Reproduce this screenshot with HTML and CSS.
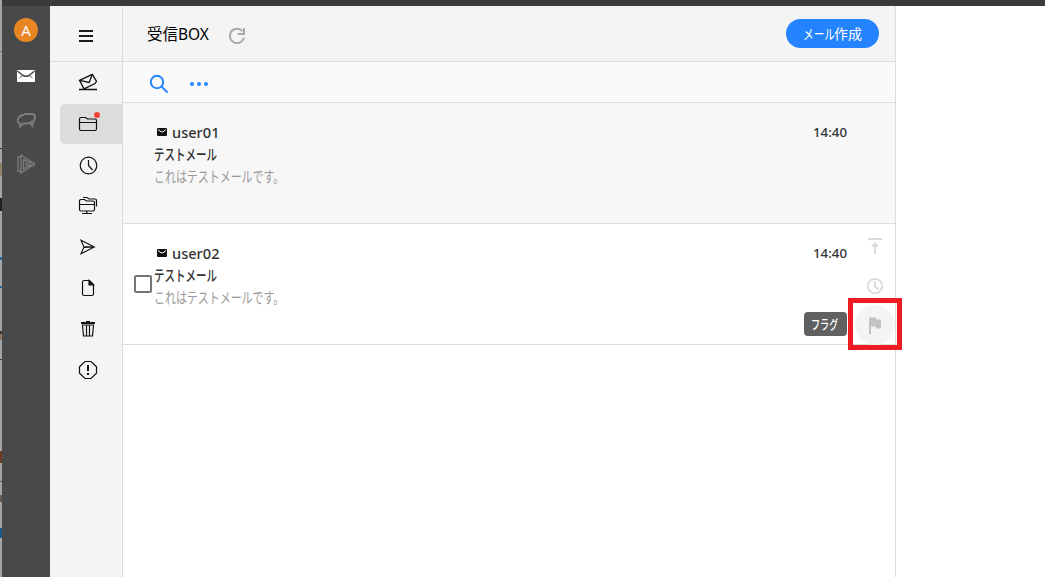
FILE: index.html
```
<!DOCTYPE html>
<html lang="ja">
<head>
  <meta charset="UTF-8">
  <title>受信BOX</title>
  <link rel="stylesheet" href="styles.css">
</head>
<body>

  <div class="edge"></div>

  <div class="window">
    <div class="topbar"></div>
    <div class="app">

      <div class="rail">
        <div class="avatar">A</div>
        <svg class="rail-icon" viewBox="0 0 20 20">
          <rect x="1" y="4" width="18" height="12" rx=".8" fill="#fff"/>
          <path d="M1.500 5l5.500 4.500q3 1.600 6 0L18.500 5" fill="none" stroke="#48494a" stroke-width="1.500"/>
          <path d="M3.500 12l3-2.500M16.500 12l-3-2.500" fill="none" stroke="#48494a" stroke-width=".9"/>
        </svg>
        <svg class="rail-icon dim" viewBox="0 0 20 20">
          <path d="M8 4h7c3 0 4.300 1.300 4 3.500-.2 2-1.200 3.700-2.500 5l-.3 3-1.700-2" stroke-width="2.200"/>
          <path d="M9 4.500C5 5 2.500 7 1.800 9.500c-.6 2.200.2 3.300 2.200 3.700v3.300l3.500-3h4c2 0 3.200-.8 4-2.300" stroke-width="1.900"/>
        </svg>
        <svg class="rail-icon dim" viewBox="0 0 20 20">
          <path d="M5 3H2v14h3M5 1l13.500 9L5 19zM7.500 5v10l4-2.500M7.500 5l4 2.500" stroke-width="1.300"/>
          <rect x="9.500" y="7.500" width="9" height="5.500" fill="#77787a" stroke="none"/>
          <path d="M10 8l4 2.500L18 8M10 12.500l2.500-2M18 12.500l-2.500-2" stroke="#48494a" stroke-width=".8"/>
        </svg>
      </div>

      <div class="nav">
        <div class="nav-head">
          <div class="burger"><i></i><i></i><i></i></div>
        </div>
        <div class="nav-item">
          <svg viewBox="0 0 20 20"><path d="M1.500 7.300L14.300 1.300 18.500 8.300 17 10.500 6 15.800zM1.500 7.300l9.700 2.200L14.300 1.300M1 16.500h18" stroke-width="1.300"/></svg>
        </div>
        <div class="nav-item active">
          <svg viewBox="0 0 20 20"><path d="M1.500 15V5q0-1.500 1.500-1.500h4.500L9.500 5H17q1.500 0 1.500 1.500V15q0 1.500-1.500 1.500H3q-1.500 0-1.500-1.500zM1.500 8.500h17"/></svg>
          <span class="dot"></span>
        </div>
        <div class="nav-item">
          <svg viewBox="0 0 20 20"><circle cx="10.500" cy="10.500" r="8.300"/><path d="M10.500 5v5.500l4 4.500"/></svg>
        </div>
        <div class="nav-item">
          <svg viewBox="0 0 20 20"><path d="M1.500 13.500v-9Q1.500 3.500 3 3.500h3.500L8.500 5H15q1.500 0 1.500 1.300v7.200q0 1.500-1.500 1.500H3q-1.500 0-1.500-1.500zM1.500 8.500h15M5 1.500h4L11 3h6q1.500 0 1.500 1.500v6M8.800 15v2.500M4 17.500h10"/></svg>
        </div>
        <div class="nav-item">
          <svg viewBox="0 0 20 20"><path d="M3 3.300L16.300 10 3 16.800 6 10zM6 9.500l9 .5M6 10.500l9-.5" stroke-width="1.100"/></svg>
        </div>
        <div class="nav-item">
          <svg viewBox="0 0 20 20"><path d="M4.500 16V4q0-1.500 1.500-1.500h5.500l4 4V16q0 1.500-1.500 1.500H6q-1.500 0-1.500-1.500z"/><path d="M11 2.500l4.500 4.500H11z" fill="#111"/></svg>
        </div>
        <div class="nav-item">
          <svg viewBox="0 0 20 20"><path d="M8 2.500h4" stroke-width="1"/><path d="M3 4h14" stroke-width="2"/><path d="M4.500 6l1 11h9l1-11zM8.500 6v11M11.500 6v11"/></svg>
        </div>
        <div class="nav-item">
          <svg viewBox="0 0 20 20"><path d="M7 1.500h6l5.500 5.200v6.500L13 18.500H7l-5.500-5.300V6.700z"/><path d="M10 5v6M10 13v2" stroke-width="2"/></svg>
        </div>
      </div>

      <div class="main">
        <div class="header">
          <div class="title">受信BOX</div>
          <svg class="reload" viewBox="0 0 20 20"><path d="M15.500 5.200A7.200 7.200 0 1 0 17 11.500"/><path d="M17 2v6h-6.300" /></svg>
          <button class="compose"><span class="kana">メール</span>作成</button>
        </div>

        <div class="toolbar">
          <svg class="search" viewBox="0 0 20 20"><circle cx="8" cy="8" r="6.200"/><path d="M12.500 12.500l6 6"/></svg>
          <div class="more"><i></i><i></i><i></i></div>
        </div>

        <div class="mail selected">
          <div class="mail-body">
            <div class="from">
              <svg viewBox="0 0 10 8"><rect width="10" height="8" rx="1" fill="#111"/><path d="M1 1.500l3 2.300h2l3-2.300" fill="none" stroke="#f7f7f7"/></svg>
              <span>user01</span>
            </div>
            <div class="subject"><span class="kana">テストメール</span></div>
            <div class="preview"><span class="kana">これはテストメールです。</span></div>
          </div>
          <div class="time">14:40</div>
        </div>

        <div class="mail">
          <span class="check"></span>
          <div class="mail-body">
            <div class="from">
              <svg viewBox="0 0 10 8"><rect width="10" height="8" rx="1" fill="#111"/><path d="M1 1.500l3 2.300h2l3-2.300" fill="none" stroke="#fff"/></svg>
              <span>user02</span>
            </div>
            <div class="subject"><span class="kana">テストメール</span></div>
            <div class="preview"><span class="kana">これはテストメールです。</span></div>
          </div>
          <div class="time">14:40</div>
          <div class="actions">
            <div class="action">
              <svg viewBox="0 0 20 20"><path d="M3 3h14M10 18V9" stroke-width="2"/><path d="M6 10.500L10 6l4 4.500z" fill="#d9d9d9" stroke="none"/></svg>
            </div>
            <div class="action">
              <svg viewBox="0 0 20 20"><circle cx="10" cy="10" r="7.200" stroke-width="1.800"/><path d="M10 5v5.500l3.500 3" stroke-width="1.700"/></svg>
            </div>
            <div class="action hover">
              <svg viewBox="0 0 20 20"><path d="M4 2.500h7l.6 2H16v9h-4.700l-.6-2H6V19H4z" fill="#c2c2c2" stroke="none"/></svg>
            </div>
          </div>
          <div class="tooltip"><span class="kana">フラグ</span></div>
          <div class="frame"></div>
        </div>
      </div>

      <div class="reader"></div>
    </div>
  </div>

</body>
</html>
```
FILE: styles.css
```
* {
  box-sizing: border-box;
}

body {
  margin: 0;
  height: 577px;
  display: flex;
  overflow: hidden;
  background: #fff;
  font-family: "Noto Sans", "Noto Sans CJK JP", sans-serif;
  color: #333;
}

svg {
  display: block;
  flex: none;
}

/* strip of the window behind */
.edge {
  width: 2px;
  background: linear-gradient(#a3a5a6 0 51px, #777 51px 52px, #a3a5a6 52px 148px, #4a2020 148px 149px, #a3a5a6 149px 163px, #918369 163px 176px, #a3a5a6 176px 198px, #222 198px 211px, #a3a5a6 211px 257px, #28689a 257px 260px, #a3a5a6 260px 286px, #28689a 286px 288px, #a3a5a6 288px 331px, #42302b 331px 334px, #8e7a66 334px 340px, #a3a5a6 340px 359px, #444 359px 360px, #a3a5a6 360px 451px, #713920 451px 463px, #a3a5a6 463px 481px, #555 481px 482px, #a3a5a6 482px 495px, #665b4d 495px 502px, #a3a5a6 502px 528px, #195a8d 528px 538px, #a3a5a6 538px);
}

.window {
  flex: 1;
  display: flex;
  flex-direction: column;
}

.topbar {
  height: 6px;
  background: #3a3a3a;
}

.app {
  flex: 1;
  display: flex;
}

/* left rail */
.rail {
  width: 48px;
  background: #48494a;
  display: flex;
  flex-direction: column;
  align-items: center;
  gap: 24px;
  padding-top: 12px;
}

.avatar {
  width: 24px;
  height: 24px;
  border-radius: 50%;
  background: #e88624;
  color: #fff;
  font-size: 15px;
  line-height: 25px;
  text-align: center;
}

.rail-icon {
  width: 20px;
  height: 20px;
}

.dim {
  fill: none;
  stroke: #7b7c7e;
}

/* folders */
.nav {
  width: 73px;
  background: #f4f4f4;
  border-right: 1px solid #dcdcdc;
}

.nav-head {
  height: 56px;
  padding: 24px 0 0 29px;
  border-bottom: 1px solid #dcdcdc;
}

.burger {
  width: 14px;
  display: grid;
  gap: 3px;
}

.burger i {
  height: 2px;
  background: #1c1c1c;
}

.nav-item {
  position: relative;
  height: 40px;
  margin: 1px 0 0 10px;
  padding: 10px 0 0 18px;
  border-radius: 5px 0 0 5px;
}

.nav-item.active {
  background: #dcdcdc;
}

.nav-item svg {
  width: 20px;
  height: 20px;
  fill: none;
  stroke: #111;
  stroke-width: 1.2;
}

.dot {
  position: absolute;
  left: 34px;
  top: 8px;
  width: 6px;
  height: 6px;
  border-radius: 50%;
  background: #f44336;
}

/* mail list */
.main {
  width: 773px;
  border-right: 1px solid #dcdcdc;
}

.header {
  height: 56px;
  display: flex;
  align-items: center;
  padding: 0 16px 0 24px;
  background: #f4f4f4;
  border-bottom: 1px solid #dcdcdc;
}

.title {
  font-size: 15.5px;
  line-height: 20px;
  color: #000;
}

.reload {
  width: 20px;
  height: 20px;
  margin: 4px 0 0 18px;
  fill: none;
  stroke: #aaa;
  stroke-width: 2;
}

.compose {
  width: 93px;
  height: 29px;
  margin-left: auto;
  padding: 0 0 0 17px;
  border: 0;
  border-radius: 15px;
  background: #2484ff;
  color: #fff;
  font: 14px/28px "Noto Sans", "Noto Sans CJK JP", sans-serif;
  text-align: left;
  white-space: nowrap;
}

/* narrow kana, as in a UI font */
.kana {
  display: inline-block;
  transform: scaleX(0.7);
  transform-origin: 0 50%;
  white-space: nowrap;
}

.compose .kana {
  margin-right: -11px;
  transform: scaleX(0.76);
}

.toolbar {
  height: 41px;
  display: flex;
  align-items: center;
  gap: 21px;
  padding-left: 26px;
  background: #fafafa;
  border-bottom: 1px solid #dcdcdc;
}

.search {
  width: 20px;
  height: 20px;
  margin-top: 3px;
  fill: none;
  stroke: #2484ff;
  stroke-width: 2;
}

.more {
  display: flex;
  gap: 3px;
  margin-top: 3px;
}

.more i {
  width: 4px;
  height: 4px;
  border-radius: 50%;
  background: #2484ff;
}

.mail {
  position: relative;
  height: 121px;
  display: flex;
  padding: 18px 0 0 31px;
  border-bottom: 1px solid #dcdcdc;
}

.mail.selected {
  background: #f7f7f7;
}

.mail-body {
  width: 659px;
  font-size: 15px;
  line-height: 22px;
}

.from {
  display: flex;
  align-items: center;
  gap: 5px;
  padding-left: 3px;
  font-size: 14.6px;
  font-weight: 500;
  line-height: 23px;
  height: 22px;
  color: #333;
}

.from svg {
  width: 10px;
  height: 8px;
}

.subject {
  height: 22px;
  font-weight: 500;
  color: #333;
}

.preview {
  height: 22px;
  color: #999;
}

.preview .kana {
  transform: scaleX(0.73);
}

.time {
  font-size: 13.3px;
  font-weight: 500;
  line-height: 22px;
}

.check {
  position: absolute;
  left: 11px;
  top: 51px;
  width: 18px;
  height: 18px;
  border: 2px solid #757575;
  border-radius: 2px;
  background: #fff;
}

.actions {
  position: absolute;
  right: 0;
  top: 2px;
}

.action {
  width: 40px;
  height: 40px;
  padding: 10px;
  border-radius: 50%;
}

.action.hover {
  margin-top: -1px;
  background: #f4f4f4;
}

.action svg {
  width: 20px;
  height: 20px;
  fill: none;
  stroke: #d9d9d9;
}

.tooltip {
  position: absolute;
  left: 681px;
  top: 88px;
  width: 43px;
  height: 24px;
  padding-left: 7px;
  border-radius: 4px;
  background: #616161;
  color: #fff;
  font-size: 13px;
  font-weight: 500;
  line-height: 25px;
}

.frame {
  position: absolute;
  left: 725px;
  top: 74px;
  width: 54px;
  height: 52px;
  border: 5px solid #ed1c24;
}

.reader {
  flex: 1;
}
```
